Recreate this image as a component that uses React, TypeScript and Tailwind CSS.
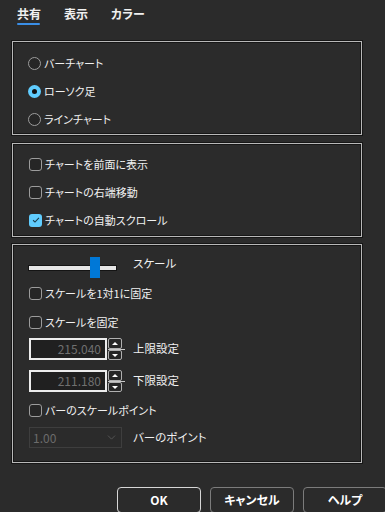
import { ChevronDown } from "lucide-react";

const FONT = "font-['Yu_Gothic_UI','Noto_Sans_CJK_JP',sans-serif] [font-feature-settings:'palt']";

function GroupBox({ h, className, children }: { h: string; className?: string; children: React.ReactNode }) {
  return (
    <div
      className={`ml-[12px] w-[350px] border border-[#b8b8b8] shadow-[0_0_0_1px_#161616,inset_0_0_0_1px_#161616] ${h} ${className ?? ""}`}
    >
      {children}
    </div>
  );
}

function Radio({ label, checked }: { label: string; checked?: boolean }) {
  return (
    <div className="flex h-[28px] items-center pl-[15px]">
      {checked ? (
        <span className="flex h-[13px] w-[13px] items-center justify-center rounded-full bg-[#60cdff]">
          <span className="h-[5px] w-[5px] rounded-full bg-[#111]" />
        </span>
      ) : (
        <span className="h-[13px] w-[13px] rounded-full border border-[#9c9c9c] bg-[#262626]" />
      )}
      <span className="ml-[3px] text-[11px] text-[#f0f0f0]">{label}</span>
    </div>
  );
}

function Check({ label, checked, className }: { label: string; checked?: boolean; className?: string }) {
  return (
    <div className={`flex h-[16px] items-center pl-[16px] ${className ?? ""}`}>
      {checked ? (
        <span className="flex h-[13px] w-[13px] items-center justify-center rounded-[3px] bg-[#60cdff]">
          <svg viewBox="0 0 12 12" className="h-[10px] w-[10px]">
            <path d="M2.5 6.3l2.3 2.2 4.7-5" fill="none" stroke="#1b3a4a" strokeWidth="1.3" />
          </svg>
        </span>
      ) : (
        <span className="h-[13px] w-[13px] rounded-[3px] border border-[#9c9c9c] bg-[#262626]" />
      )}
      <span className="ml-[3px] text-[11px] text-[#f0f0f0]">{label}</span>
    </div>
  );
}

function Spin() {
  return (
    <div className="ml-[1px] flex w-[16px] flex-col items-start">
      <div className="flex h-[11px] w-[14px] items-center justify-center rounded-[2px] border border-[#b0b0b0] bg-[#262626]">
        <span className="h-0 w-0 border-x-[3px] border-b-[3px] border-x-transparent border-b-white" />
      </div>
      <div className="h-[1px] w-[17px] bg-[#c8c8c8]" />
      <div className="flex h-[10px] w-[14px] items-center justify-center rounded-[2px] border border-[#b0b0b0] bg-[#262626]">
        <span className="h-0 w-0 border-x-[3px] border-t-[3px] border-x-transparent border-t-white" />
      </div>
    </div>
  );
}

function NumberRow({ value, label, className }: { value: string; label: string; className?: string }) {
  return (
    <div className={`flex h-[22px] items-center pl-[16px] ${className ?? ""}`}>
      <div className="flex h-[22px] w-[78px] items-center justify-end border-2 border-[#ececec] bg-[#202020] pr-[4px] text-[12px] text-[#707070]">
        {value}
      </div>
      <Spin />
      <span className="ml-[9px] text-[11.5px] text-[#f0f0f0]">{label}</span>
    </div>
  );
}

function Button({ label, primary }: { label: string; primary?: boolean }) {
  return (
    <button
      className={`flex h-[26px] w-[84px] shrink-0 items-center justify-center rounded-[4px] border bg-[#2b2b2b] text-[12px] font-bold text-white ${
        primary ? "border-[#d6d6d6]" : "border-[#7c7c7c]"
      }`}
    >
      {label}
    </button>
  );
}

export default function App() {
  return (
    <div className={`h-[512px] w-[385px] overflow-hidden bg-[#2b2b2b] ${FONT}`}>
      <div className="flex h-[41px] items-start gap-[23px] pl-[17px] pt-[5px] text-[12px] font-bold text-[#f0f0f0]">
        <div className="flex flex-col">
          <span className="leading-[17px]">共有</span>
          <span className="mt-[1px] h-[2px] w-[23px] rounded-full bg-[#3a8ee6]" />
        </div>
        <span className="leading-[17px]">表示</span>
        <span className="leading-[17px]">カラー</span>
      </div>

      <GroupBox h="h-[94px]" className="pt-[7px]">
        <Radio label="バーチャート" />
        <Radio label="ローソク足" checked />
        <Radio label="ラインチャート" />
      </GroupBox>

      <GroupBox h="h-[94px]" className="mt-[8px] pt-[12px]">
        <Check label="チャートを前面に表示" />
        <Check label="チャートの右端移動" className="mt-[12px]" />
        <Check label="チャートの自動スクロール" checked className="mt-[12px]" />
      </GroupBox>

      <GroupBox h="h-[219px]" className="mt-[7px] pt-[11px]">
        <div className="flex h-[22px] items-start pl-[15px]">
          <div className="relative mt-[9px] h-[6px] w-[89px] border border-[#141414] bg-[#e6e6e6]">
            <span className="absolute left-[61px] top-[-9px] h-[21px] w-[10px] bg-[#0078d7]" />
          </div>
          <span className="ml-[16px] mt-[-1px] text-[11.5px] text-[#f0f0f0]">スケール</span>
        </div>
        <Check label="スケールを1対1に固定" className="mt-[7px]" />
        <Check label="スケールを固定" className="mt-[13px]" />
        <NumberRow value="215.040" label="上限設定" className="mt-[8px]" />
        <NumberRow value="211.180" label="下限設定" className="mt-[10px]" />
        <Check label="バーのスケールポイント" className="mt-[10px]" />
        <div className="mt-[9px] flex h-[21px] items-center pl-[16px]">
          <div className="flex h-[21px] w-[93px] items-center justify-between border border-[#3e3e3e] pl-[3px] pr-[3px] text-[12px] text-[#6c6c6c]">
            <span>1.00</span>
            <ChevronDown size={13} strokeWidth={1.5} color="#5c5c5c" />
          </div>
          <span className="ml-[11px] text-[11.5px] text-[#f0f0f0]">バーのポイント</span>
        </div>
      </GroupBox>

      <div className="mt-[24px] flex gap-[9px] pl-[117px]">
        <Button label="OK" primary />
        <Button label="キャンセル" />
        <Button label="ヘルプ" />
      </div>
    </div>
  );
}
